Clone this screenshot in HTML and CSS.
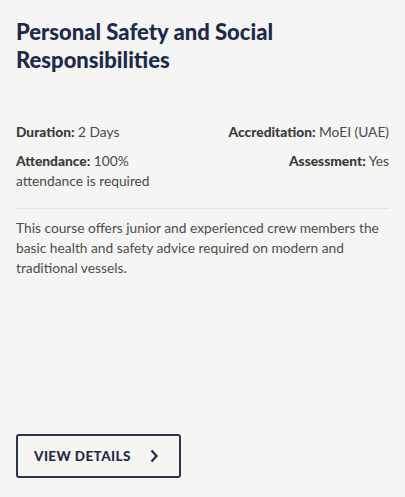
FILE: index.html
```html
<!DOCTYPE html>
<html>
<head>
<meta charset="utf-8">
<link rel="stylesheet" href="styles.css">
</head>
<body>
<div class="card">
  <h2 class="title">Personal Safety and Social Responsibilities</h2>
  <div class="meta">
    <div class="meta-item"><b>Duration:</b> 2 Days</div>
    <div class="meta-item right"><b>Accreditation:</b> MoEI (UAE)</div>
    <div class="meta-item"><b>Attendance:</b> 100% attendance is required</div>
    <div class="meta-item right"><b>Assessment:</b> Yes</div>
  </div>
  <p class="desc">This course offers junior and experienced crew members the basic health and safety advice required on modern and traditional vessels.</p>
  <a class="btn" href="#">VIEW DETAILS
    <svg width="10" height="14" viewBox="0 0 10 14"><path d="M2.5 1.5 L7.5 7 L2.5 12.5" fill="none" stroke="#1f2b48" stroke-width="2.2"/></svg>
  </a>
</div>
</body>
</html>
```
FILE: styles.css
```css
* { box-sizing: border-box; }
html, body { margin: 0; padding: 0; background: #f5f5f3; }
body { font-family: Lato, "Noto Sans", sans-serif; color: #4a4a4a; }
.card {
  height: 497px;
  padding: 18px 16px 19px;
  display: flex;
  flex-direction: column;
}
.title {
  margin: 0;
  font-size: 22px;
  line-height: 28px;
  font-weight: 900;
  color: #1d2a48;
  width: 300px;
}
.meta {
  margin-top: 48px;
  display: grid;
  grid-template-columns: 1fr 1fr;
  column-gap: 16px;
  row-gap: 9px;
  font-size: 13.75px;
  line-height: 20px;
  color: #4a4a4a;
  padding-bottom: 17px;
  border-bottom: 1px solid #e4e4e2;
}
.meta-item { max-width: 150px; }
.meta-item b { color: #3a3a3a; font-weight: 900; }
.meta-item.right { text-align: right; justify-self: end; max-width: none; }
.desc {
  margin: 9px 0 0;
  font-size: 13.75px;
  line-height: 20px;
  color: #4d4d4d;
}
.btn {
  margin-top: auto;
  align-self: flex-start;
  display: flex;
  align-items: center;
  gap: 18px;
  height: 44px;
  width: 165px;
  padding: 0 16px 0 16px;
  border: 2px solid #2a3552;
  border-radius: 3px;
  color: #1f2b48;
  text-decoration: none;
  font-size: 13.5px;
  font-weight: 900;
  letter-spacing: 0.4px;
}
```
